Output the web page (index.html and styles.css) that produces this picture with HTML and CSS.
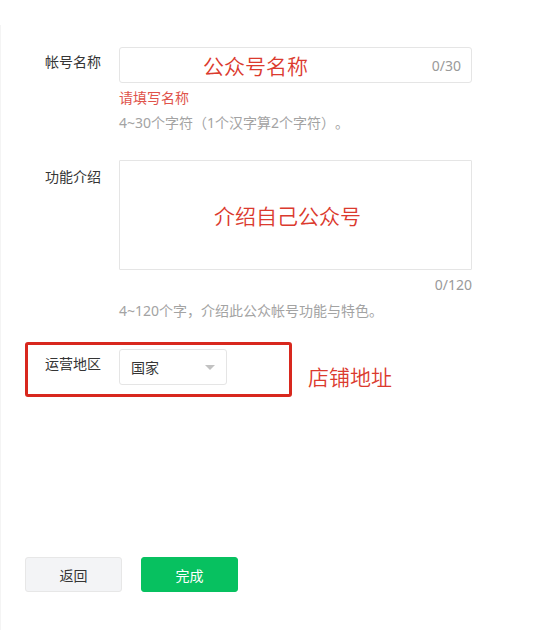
FILE: index.html
```html
<!DOCTYPE html>
<html lang="zh-CN">
<head>
<meta charset="utf-8">
<title>公众号信息</title>
<link rel="stylesheet" href="styles.css">
</head>
<body>
<div class="page">
  <form class="form">
    <div class="field field-name">
      <label class="label">帐号名称</label>
      <div class="control">
        <div class="input">
          <span class="note note-name">公众号名称</span>
          <span class="count">0/30</span>
        </div>
        <div class="error">请填写名称</div>
        <div class="tip">4~30个字符（1个汉字算2个字符）。</div>
      </div>
    </div>

    <div class="field field-intro">
      <label class="label label-intro">功能介绍</label>
      <div class="control">
        <div class="textarea">
          <span class="note note-intro">介绍自己公众号</span>
        </div>
        <div class="count-below">0/120</div>
        <div class="tip tip-intro">4~120个字，介绍此公众帐号功能与特色。</div>
      </div>
    </div>

    <div class="field field-region">
      <span class="mark-box"></span>
      <label class="label">运营地区</label>
      <div class="control control-row">
        <div class="select">
          <span>国家</span>
          <span class="arrow"></span>
        </div>
      </div>
      <span class="note note-region">店铺地址</span>
    </div>
  </form>

  <div class="actions">
    <button type="button" class="btn btn-default">返回</button>
    <button type="button" class="btn btn-primary">完成</button>
  </div>
</div>
</body>
</html>
```

FILE: styles.css
```css
* { box-sizing: border-box; }

html, body {
  margin: 0;
  padding: 0;
  background: #fff;
}

body {
  font-family: "Noto Sans", "Noto Sans CJK SC", sans-serif;
  font-size: 14px;
  color: #353535;
  text-spacing-trim: space-all;
}

.page {
  margin-top: 25px;
  padding-top: 22px;
  height: 605px;
  border-left: 1px solid #f4f4f4;
}

.form {
  padding-left: 44px;
}

.field {
  position: relative;
  display: grid;
  grid-template-columns: 74px 353px;
}

.label {
  font-size: 14px;
  line-height: 20px;
  padding-top: 5px;
  color: #353535;
}

.label-intro {
  padding-top: 7px;
}

.input {
  position: relative;
  height: 36px;
  border: 1px solid #e5e5e5;
  border-radius: 3px;
  display: flex;
  align-items: center;
  justify-content: flex-end;
  padding-right: 10px;
}

.count {
  color: #9a9a9a;
  font-size: 14px;
}

.error {
  margin-top: 5px;
  line-height: 20px;
  color: #e0534b;
}

.tip {
  margin-top: 5px;
  line-height: 20px;
  color: #a3a3a3;
}

.field-intro {
  margin-top: 27px;
}

.textarea {
  position: relative;
  height: 110px;
  border: 1px solid #e5e5e5;
  border-radius: 1px;
}

.count-below {
  margin-top: 5px;
  line-height: 20px;
  text-align: right;
  color: #9a9a9a;
}

.tip-intro {
  margin-top: 6px;
}

.field-region {
  margin-top: 28px;
}

.select {
  width: 108px;
  height: 36px;
  border: 1px solid #e5e5e5;
  border-radius: 3px;
  display: flex;
  align-items: center;
  justify-content: space-between;
  padding: 0 11px 0 11px;
  color: #353535;
}

.arrow {
  width: 0;
  height: 0;
  border-left: 5px solid transparent;
  border-right: 5px solid transparent;
  border-top: 5px solid #c2c2c2;
  margin-top: 1px;
}

/* annotation overlays */
.note {
  position: absolute;
  color: #db3a2e;
  font-family: "Noto Sans CJK SC", sans-serif;
  font-size: 21px;
  font-weight: 350;
  line-height: 28px;
  white-space: nowrap;
}

.note-name {
  left: 83px;
  top: 3px;
}

.note-intro {
  left: 94px;
  top: 40px;
}

.note-region {
  left: 263px;
  top: 13px;
}

.mark-box {
  position: absolute;
  left: -20px;
  top: -7px;
  width: 267px;
  height: 55px;
  border: 3px solid #d8281e;
  border-radius: 3px;
  pointer-events: none;
}

.actions {
  margin-top: 172px;
  padding-left: 24px;
  display: flex;
  gap: 19px;
}

.btn {
  width: 97px;
  height: 35px;
  border-radius: 3px;
  font-family: inherit;
  font-size: 14px;
  cursor: pointer;
}

.btn-default {
  background: #f3f4f6;
  border: 1px solid #e7e7e7;
  color: #353535;
}

.btn-primary {
  background: #07c160;
  border: 1px solid #07c160;
  color: #fff;
}
```
